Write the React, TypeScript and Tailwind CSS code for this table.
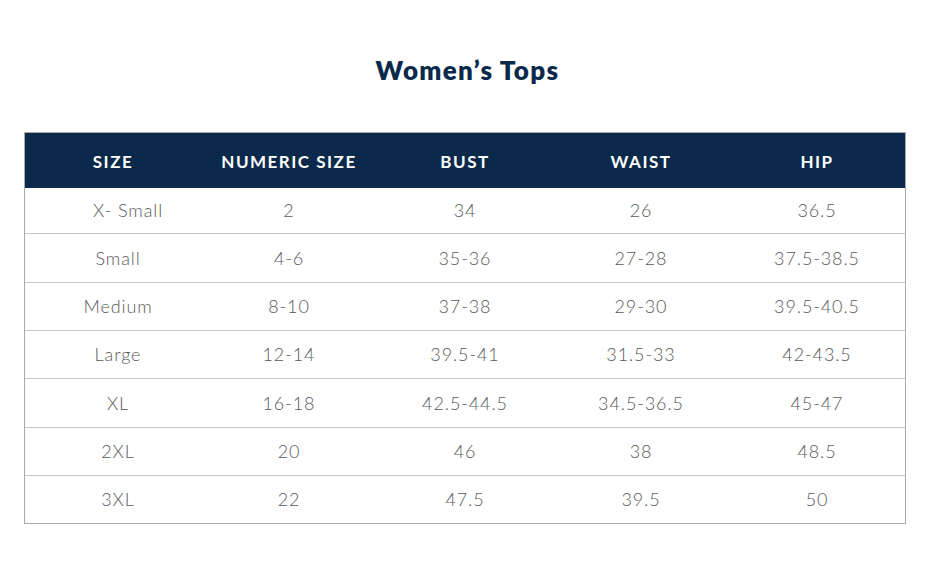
const rows = [
  ['X- Small', '2', '34', '26', '36.5'],
  ['Small', '4-6', '35-36', '27-28', '37.5-38.5'],
  ['Medium', '8-10', '37-38', '29-30', '39.5-40.5'],
  ['Large', '12-14', '39.5-41', '31.5-33', '42-43.5'],
  ['XL', '16-18', '42.5-44.5', '34.5-36.5', '45-47'],
  ['2XL', '20', '46', '38', '48.5'],
  ['3XL', '22', '47.5', '39.5', '50'],
];

const headers = ['SIZE', 'NUMERIC SIZE', 'BUST', 'WAIST', 'HIP'];

// row heights read off the picture (border included)
const heights = ['h-[45px]', 'h-[49px]', 'h-[48px]', 'h-[48px]', 'h-[49px]', 'h-[48px]', 'h-[48px]'];

export default function App() {
  return (
    <div className="min-h-screen w-[935px] bg-white font-['Lato','Liberation_Sans',sans-serif]">
      {/* Title */}
      <h1 className="pt-[54px] text-center text-[26px] font-extrabold leading-8 tracking-[1.3px] text-[#0b2a4b]">
        Women’s Tops
      </h1>

      {/* Size table */}
      <div className="ml-[24px] mt-[46px] w-[882px] border border-[#a9a9a9]">
        <div className="grid h-[55px] grid-cols-5 items-center bg-[#0b2a4b] pt-[2px] text-[17px] font-bold tracking-[1.5px] text-white">
          {headers.map((h) => (
            <div key={h} className="text-center">
              {h}
            </div>
          ))}
        </div>
        {rows.map((r, i) => (
          <div
            key={r[0]}
            className={`grid grid-cols-5 items-center text-[18px] font-light tracking-[0.9px] text-[#595959] ${heights[i]} ${
              i > 0 ? 'border-t border-[#c6c6c6]' : ''
            }`}
          >
            {r.map((c, j) => (
              <div key={j} className={`text-center ${j === 0 && i === 0 ? 'pl-[30px]' : ''} ${j === 0 && i > 0 ? 'pl-[10px]' : ''}`}>
                {c}
              </div>
            ))}
          </div>
        ))}
      </div>
    </div>
  );
}
